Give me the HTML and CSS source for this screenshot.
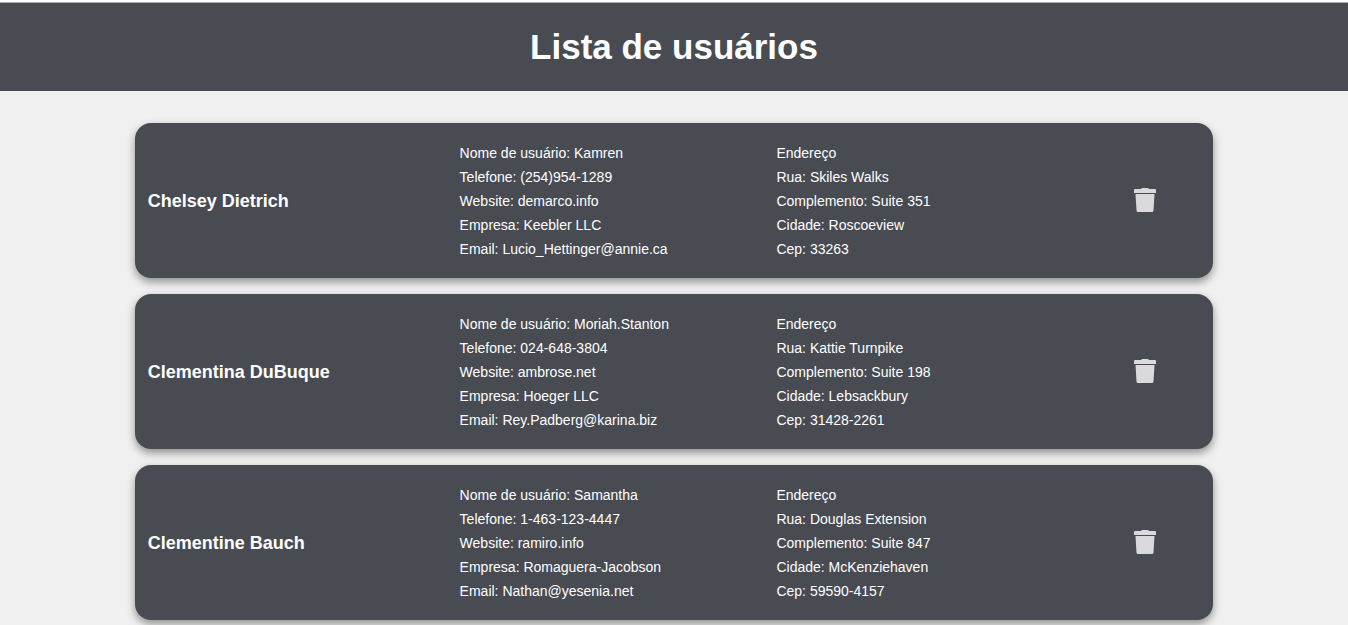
FILE: index.html
```html
<!DOCTYPE html>
<html lang="pt-BR">
<head>
<meta charset="utf-8">
<meta name="viewport" content="width=device-width, initial-scale=1">
<title>Lista de usuários</title>
<link rel="stylesheet" href="styles.css">
</head>
<body>
<header class="header"><h1 class="title">Lista de usuários</h1></header>
<main>
<ul class="users">
  <li class="card">
    <h2 class="name">Chelsey Dietrich</h2>
    <div class="info">
      <p>Nome de usuário: Kamren</p>
      <p>Telefone: (254)954-1289</p>
      <p>Website: demarco.info</p>
      <p>Empresa: Keebler LLC</p>
      <p>Email: Lucio_Hettinger@annie.ca</p>
    </div>
    <div class="info">
      <p>Endereço</p>
      <p>Rua: Skiles Walks</p>
      <p>Complemento: Suite 351</p>
      <p>Cidade: Roscoeview</p>
      <p>Cep: 33263</p>
    </div>
    <button class="remove" type="button" aria-label="Remover Chelsey Dietrich">
      <svg class="trash" viewBox="0 0 22 24" aria-hidden="true"><path d="M0 2Q0 1 1 1H7L8 0H14L15 1H21Q22 1 22 2V5H0ZM1.500 6H20.500L19.500 22.500Q19.400 24 18 24H4Q2.600 24 2.500 22.500Z"/></svg>
    </button>
  </li>
  <li class="card">
    <h2 class="name">Clementina DuBuque</h2>
    <div class="info">
      <p>Nome de usuário: Moriah.Stanton</p>
      <p>Telefone: 024-648-3804</p>
      <p>Website: ambrose.net</p>
      <p>Empresa: Hoeger LLC</p>
      <p>Email: Rey.Padberg@karina.biz</p>
    </div>
    <div class="info">
      <p>Endereço</p>
      <p>Rua: Kattie Turnpike</p>
      <p>Complemento: Suite 198</p>
      <p>Cidade: Lebsackbury</p>
      <p>Cep: 31428-2261</p>
    </div>
    <button class="remove" type="button" aria-label="Remover Clementina DuBuque">
      <svg class="trash" viewBox="0 0 22 24" aria-hidden="true"><path d="M0 2Q0 1 1 1H7L8 0H14L15 1H21Q22 1 22 2V5H0ZM1.500 6H20.500L19.500 22.500Q19.400 24 18 24H4Q2.600 24 2.500 22.500Z"/></svg>
    </button>
  </li>
  <li class="card">
    <h2 class="name">Clementine Bauch</h2>
    <div class="info">
      <p>Nome de usuário: Samantha</p>
      <p>Telefone: 1-463-123-4447</p>
      <p>Website: ramiro.info</p>
      <p>Empresa: Romaguera-Jacobson</p>
      <p>Email: Nathan@yesenia.net</p>
    </div>
    <div class="info">
      <p>Endereço</p>
      <p>Rua: Douglas Extension</p>
      <p>Complemento: Suite 847</p>
      <p>Cidade: McKenziehaven</p>
      <p>Cep: 59590-4157</p>
    </div>
    <button class="remove" type="button" aria-label="Remover Clementine Bauch">
      <svg class="trash" viewBox="0 0 22 24" aria-hidden="true"><path d="M0 2Q0 1 1 1H7L8 0H14L15 1H21Q22 1 22 2V5H0ZM1.500 6H20.500L19.500 22.500Q19.400 24 18 24H4Q2.600 24 2.500 22.500Z"/></svg>
    </button>
  </li>
</ul>
</main>
</body>
</html>
```
FILE: styles.css
```css
* {
  box-sizing: border-box;
  margin: 0;
  padding: 0;
}

html {
  scrollbar-width: none;
}

body {
  background: #f0f0f0;
  color: #fff;
  font-family: Arial, "Liberation Sans", sans-serif;
}

.header {
  border-top: 2px solid #fff;
  background: #484b52;
  box-shadow: inset 0 1px #a9a9ad;
  padding: 24px 16px;
  text-align: center;
}

.title {
  font-size: 35px;
  line-height: 41px;
}

.users {
  display: flex;
  flex-direction: column;
  gap: 16px;
  width: 80%;
  margin: 0 auto;
  padding: 32px 0;
  list-style: none;
}

.card {
  display: grid;
  grid-template-columns: 312fr 317fr 313fr 111fr;
  align-items: center;
  padding: 18px 13px 17px;
  border-radius: 16px;
  background: #484b52;
  box-shadow: 0 4px 8px rgba(0, 0, 0, 0.4);
}

.name {
  font-size: 18px;
  line-height: 22px;
}

.info {
  font-size: 14px;
  line-height: 24px;
}

.remove {
  justify-self: center;
  display: flex;
  margin-bottom: 2px;
  border: 0;
  background: none;
  color: #dadadc;
  cursor: pointer;
}

.trash {
  width: 22px;
  height: 24px;
  fill: currentColor;
}
```
